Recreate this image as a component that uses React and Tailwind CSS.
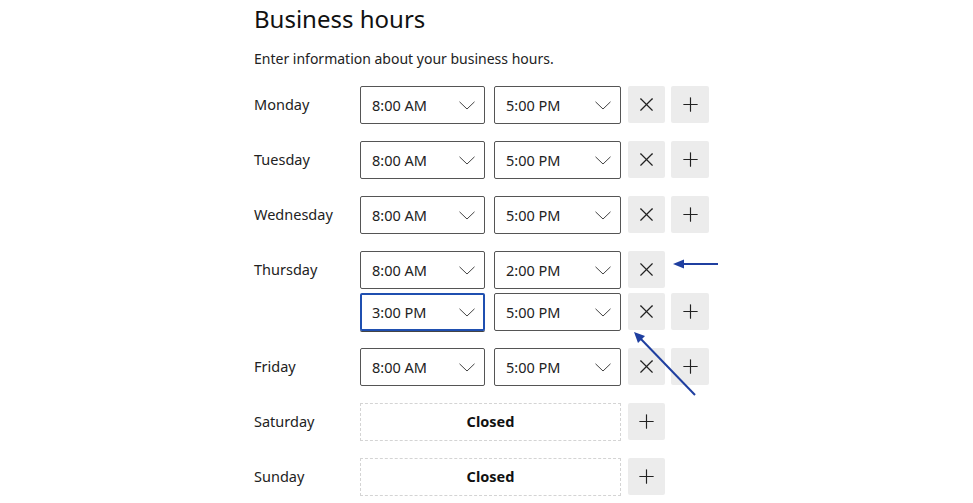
import { X, Plus } from 'lucide-react';

const days = [
  { name: 'Monday', slots: [['8:00 AM', '5:00 PM']] },
  { name: 'Tuesday', slots: [['8:00 AM', '5:00 PM']] },
  { name: 'Wednesday', slots: [['8:00 AM', '5:00 PM']] },
  { name: 'Thursday', slots: [['8:00 AM', '2:00 PM'], ['3:00 PM', '5:00 PM', true]] },
  { name: 'Friday', slots: [['8:00 AM', '5:00 PM']] },
  { name: 'Saturday', slots: [] },
  { name: 'Sunday', slots: [] },
];

function Chevron() {
  return (
    <svg width="16" height="9" viewBox="0 0 16 9" fill="none">
      <polyline points="0.5,0.8 8,8 15.5,0.8" stroke="#444" strokeWidth="1" />
    </svg>
  );
}

function Select({ value, focused, wide }) {
  const width = wide ? 'w-[127px]' : 'w-[125px]';
  return (
    <div
      className={
        focused
          ? `flex h-[38px] ${width} items-center justify-between rounded-[2px] border-2 border-[#1f4fb0] pl-[10px] pr-[8px] shadow-[0_1px_0_#444]`
          : `flex h-[38px] ${width} items-center justify-between rounded-[2px] border border-[#555] pl-[11px] pr-[9px]`
      }
    >
      <span className="translate-y-[1px] text-[14.5px] text-[#222]">{value}</span>
      <Chevron />
    </div>
  );
}

function IconButton({ children, wide }) {
  return (
    <button className={`flex h-[37px] ${wide ? 'w-[38px]' : 'w-[37px]'} items-center justify-center rounded-[2px] bg-[#ececec] text-[#222]`}>
      {children}
    </button>
  );
}

export default function App() {
  return (
    <div className="relative min-h-[503px] bg-white pl-[254px] pt-[3px]" style={{ fontFamily: '"Noto Sans", "Open Sans", sans-serif' }}>
      <h1 className="text-[24px] leading-[32px] text-[#111]">Business hours</h1>
      <p className="mt-[13px] text-[14px] text-[#222]">Enter information about your business hours.</p>

      <div className="mt-[17px] flex flex-col gap-[17px]">
        {days.map((day) => (
          <div key={day.name} className="flex">
            <div className="flex h-[38px] w-[106px] items-center text-[14.5px] text-[#222]">{day.name}</div>
            {day.slots.length === 0 ? (
              <div className="flex gap-[7px]">
                <div className="flex h-[38px] w-[261px] items-center justify-center border border-dashed border-[#d4d4d4] text-[14.5px] font-bold text-[#111]">
                  Closed
                </div>
                <IconButton>
                  <Plus size={23} strokeWidth={1.2} />
                </IconButton>
              </div>
            ) : (
              <div className="flex flex-col gap-[4px]">
                {day.slots.map((slot, i) => (
                  <div key={i} className="flex">
                    <Select value={slot[0]} focused={slot[2]} />
                    <div className="ml-[9px]">
                      <Select value={slot[1]} wide />
                    </div>
                    <div className="ml-[7px] flex gap-[6px]">
                      <IconButton>
                        <X size={23} strokeWidth={1.2} />
                      </IconButton>
                      {i === day.slots.length - 1 && (
                        <IconButton wide>
                          <Plus size={23} strokeWidth={1.2} />
                        </IconButton>
                      )}
                    </div>
                  </div>
                ))}
              </div>
            )}
          </div>
        ))}
      </div>

      {/* annotation arrows */}
      <svg className="absolute left-0 top-0" width="973" height="503" fill="none">
        <line x1="718" y1="264" x2="680" y2="264" stroke="#1f3fa0" strokeWidth="2" />
        <polygon points="673,264 684,259.5 684,268.5" fill="#1f3fa0" />
        <line x1="695" y1="395" x2="639" y2="337" stroke="#1f3fa0" strokeWidth="2" />
        <polygon points="634,332 645,336 638,343" fill="#1f3fa0" />
      </svg>
    </div>
  );
}
